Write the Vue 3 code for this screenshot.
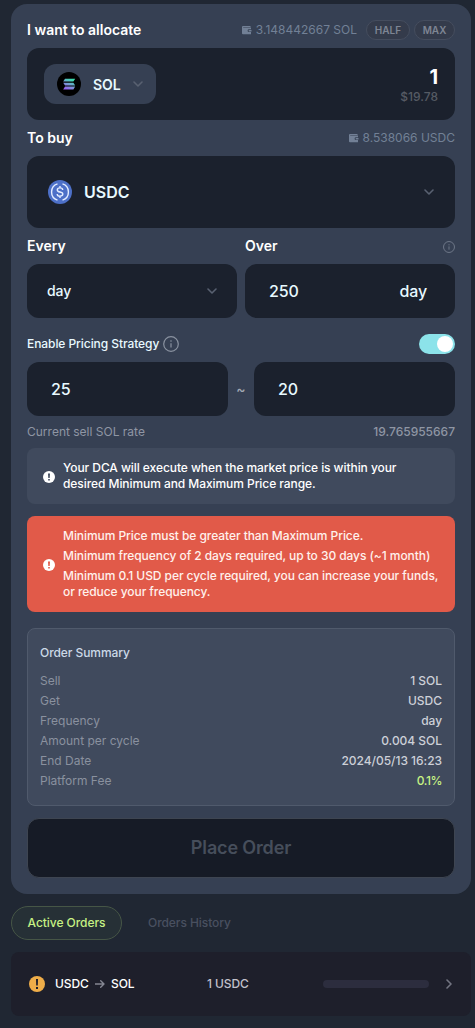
<script setup>
const summary = [
  { label: 'Sell', value: '1 SOL' },
  { label: 'Get', value: 'USDC' },
  { label: 'Frequency', value: 'day' },
  { label: 'Amount per cycle', value: '0.004 SOL' },
  { label: 'End Date', value: '2024/05/13 16:23' },
  { label: 'Platform Fee', value: '0.1%', accent: true },
]
const errors = [
  'Minimum Price must be greater than Maximum Price.',
  'Minimum frequency of 2 days required, up to 30 days (~1 month)',
  'Minimum 0.1 USD per cycle required, you can increase your funds, or reduce your frequency.',
]
</script>

<template>
  <main class="page">
    <section class="card">
      <div class="head first">
        <span class="title">I want to allocate</span>
        <div class="balance">
          <svg class="wallet" width="10" height="9" viewBox="0 0 10 9"><path fill="currentColor" d="M1 0h7.500v1H1.200v.5H9v1.800H7a1.300 1.300 0 0 0 0 2.800H9V8.300H1A1 1 0 0 1 0 7.300V1a1 1 0 0 1 1-1zM7.300 4h2.200v1.500H7.300a.7.7 0 0 1 0-1.500z" /></svg>
          <span class="amount">3.148442667 SOL</span>
          <span class="pill half">HALF</span>
          <span class="pill max">MAX</span>
        </div>
      </div>

      <div class="box token-box">
        <div class="token-pill">
          <svg width="24" height="24" viewBox="0 0 24 24">
            <defs>
              <linearGradient id="sol" x1="0" y1="1" x2="0.6" y2="0">
                <stop offset="0" stop-color="#9b55f5" />
                <stop offset=".5" stop-color="#7d93d8" />
                <stop offset="1" stop-color="#3bdcae" />
              </linearGradient>
            </defs>
            <circle cx="12" cy="12" r="12" fill="#000" />
            <path fill="url(#sol)" d="M8 6.800h10.200l-1.800 2.800H6.200zM6.200 10.700h10.200l1.800 2.800H8zM8 14.600h10.200l-1.800 2.800H6.200z" />
          </svg>
          <span class="sol-name">SOL</span>
          <svg class="chev" width="10" height="6" viewBox="0 0 10 6"><path d="M1 1l4 4 4-4" /></svg>
        </div>
        <div class="sum">
          <span class="sum-value">1</span>
          <span class="sum-usd">$19.78</span>
        </div>
      </div>

      <div class="head">
        <span class="title">To buy</span>
        <div class="balance">
          <svg class="wallet" width="10" height="9" viewBox="0 0 10 9"><path fill="currentColor" d="M1 0h7.500v1H1.200v.5H9v1.800H7a1.300 1.300 0 0 0 0 2.800H9V8.300H1A1 1 0 0 1 0 7.300V1a1 1 0 0 1 1-1zM7.300 4h2.200v1.500H7.300a.7.7 0 0 1 0-1.500z" /></svg>
          <span class="amount">8.538066 USDC</span>
        </div>
      </div>

      <div class="box buy-box">
        <svg width="24" height="24" viewBox="0 0 24 24" fill="none" stroke="#e4edff">
          <circle cx="12" cy="12" r="12" fill="#4d70c8" stroke="none" />
          <path stroke-width="1.400" d="M9.500 3.900a8.500 8.500 0 0 0 0 16.200M14.500 3.900a8.500 8.500 0 0 1 0 16.200" />
          <path stroke-width="1.400" d="M14.700 10c0-1.400-1.100-2.100-2.700-2.100s-2.700.7-2.700 2 1 1.800 2.700 2.100 2.800.8 2.800 2.100-1.200 2-2.800 2-2.800-.8-2.800-2.200M12 6v2M12 16v2" />
        </svg>
        <span class="buy-name">USDC</span>
        <svg class="chev" width="10" height="6" viewBox="0 0 10 6"><path d="M1 1l4 4 4-4" /></svg>
      </div>

      <div class="pair">
        <div class="field">
          <div class="head"><span class="title">Every</span></div>
          <div class="box every">
            <span>day</span>
            <svg class="chev" width="10" height="6" viewBox="0 0 10 6"><path d="M1 1l4 4 4-4" /></svg>
          </div>
        </div>
        <div class="field">
          <div class="head">
            <span class="title">Over</span>
            <svg class="info dim" width="12" height="12" viewBox="0 0 16 16"><circle cx="8" cy="8" r="7.300" /><path d="M8 7.200v4.300M8 4.300v1.500" /></svg>
          </div>
          <div class="box over"><span>250</span><span>day</span></div>
        </div>
      </div>

      <div class="strategy">
        <span>Enable Pricing Strategy</span>
        <svg class="info" width="16" height="16" viewBox="0 0 16 16"><circle cx="8" cy="8" r="7.300" /><path d="M8 7.200v4.300M8 4.300v1.500" /></svg>
        <span class="toggle"></span>
      </div>

      <div class="range">
        <div class="box price">25</div>
        <span class="tilde">~</span>
        <div class="box price">20</div>
      </div>

      <div class="rate"><span>Current sell SOL rate</span><span class="rate-value">19.765955667</span></div>

      <div class="notice">
        <svg width="12" height="12" viewBox="0 0 12 12"><circle cx="6" cy="6" r="6" fill="#fff" /><path d="M5 2.400h2L6.700 6.900H5.300zM5.200 8h1.600v1.600H5.200z" fill="#404a5d" /></svg>
        <p>Your DCA will execute when the market price is within your desired Minimum and Maximum Price range.</p>
      </div>

      <div class="notice error">
        <svg width="12" height="12" viewBox="0 0 12 12"><circle cx="6" cy="6" r="6" fill="#fff" /><path d="M5 2.400h2L6.700 6.900H5.300zM5.200 8h1.600v1.600H5.200z" fill="#e15a49" /></svg>
        <div class="errors"><p v-for="e in errors" :key="e">{{ e }}</p></div>
      </div>

      <div class="summary">
        <h2>Order Summary</h2>
        <div v-for="row in summary" :key="row.label" class="row">
          <span>{{ row.label }}</span>
          <span class="val" :class="{ accent: row.accent }">{{ row.value }}</span>
        </div>
      </div>

      <button class="place">Place Order</button>
    </section>

    <nav class="tabs">
      <span class="tab active">Active Orders</span>
      <span class="tab">Orders History</span>
    </nav>

    <section class="order">
      <svg width="16" height="16" viewBox="0 0 16 16"><circle cx="8" cy="8" r="8" fill="#efad49" /><path d="M7 3h2l-.2 6.500H7.200zM7 11h2v2H7z" fill="#1f1f2c" /></svg>
      <span class="from">USDC</span>
      <svg class="arrow" width="10" height="8" viewBox="0 0 10 8"><path d="M0 4h9M5.700 .8L9 4 5.700 7.200" /></svg>
      <span class="to">SOL</span>
      <span class="qty">1 USDC</span>
      <span class="progress"></span>
      <svg class="next" width="6" height="10" viewBox="0 0 6 10"><path d="M1 1l4 4-4 4" /></svg>
    </section>
  </main>
</template>

<style>
body { background: #202733; }
</style>

<style scoped>
* { box-sizing: border-box; }
.page {
  width: 475px;
  height: 1028px;
  padding: 4px 4px 0 11px;
  overflow: hidden;
  background: #202733;
  font-family: Inter, "Liberation Sans", sans-serif;
  font-size: 12px;
  line-height: 16px;
  color: #e8f9ff;
}
p, h2 { margin: 0; }
.card { height: 890px; padding: 8px 16px 16px; border-radius: 16px; background: #364053; }
.head { height: 36px; display: flex; align-items: center; justify-content: space-between; }
.title { font-size: 14px; font-weight: 600; color: #fff; }
.balance { display: flex; align-items: center; color: #728096; }
.wallet { margin-right: 4px; }
.amount { font-size: 12px; white-space: nowrap; }
.pill {
  height: 20px;
  display: flex;
  align-items: center;
  justify-content: center;
  border: 1px solid #454d5e;
  border-radius: 10px;
  background: #343b4b;
  color: #7e8593;
  font-size: 10px;
  font-weight: 600;
}
.half { width: 44px; margin-left: 9px; }
.max { width: 41px; margin-left: 4px; }
.box { display: flex; align-items: center; border-radius: 12px; background: #1b212d; }
.token-box { height: 72px; padding: 0 17px; justify-content: space-between; }
.token-pill { width: 112px; height: 40px; padding: 0 13px; display: flex; align-items: center; border-radius: 12px; background: #364053; }
.sol-name { margin-left: 12px; font-size: 14px; line-height: 20px; padding-top: 1px; font-weight: 600; }
.chev { margin-left: auto; fill: none; stroke: #596171; stroke-width: 1.6; stroke-linecap: round; stroke-linejoin: round; }
.sum { display: flex; flex-direction: column; align-items: flex-end; padding-top: 1px; }
.sum-value { font-size: 20px; line-height: 24px; font-weight: 700; color: #fff; }
.sum-usd { color: #565b64; font-weight: 500; }
.buy-box { height: 72px; padding: 0 21px; }
.buy-name { margin-left: 12px; font-size: 16px; font-weight: 600; }
.pair { display: flex; gap: 8px; }
.field { flex: 1; }
.every { height: 54px; padding: 0 20px; font-size: 14px; font-weight: 500; letter-spacing: -0.1px; }
.over { height: 54px; padding: 0 28px 0 24px; justify-content: space-between; font-size: 16px; font-weight: 500; letter-spacing: -0.15px; }
.info { fill: none; stroke: #8a92a0; stroke-width: 1.2; }
.dim { margin-top: 2px; stroke: #747d8d; }
.strategy { height: 20px; margin-top: 16px; display: flex; align-items: center; gap: 4px; font-weight: 500; letter-spacing: -0.07px; }
.toggle { width: 36px; height: 20px; margin-left: auto; padding: 2px; border-radius: 10px; background: #8ce3ea; display: flex; justify-content: flex-end; }
.toggle::after { content: ""; width: 16px; height: 16px; border-radius: 50%; background: #fff; }
.range { margin-top: 8px; display: flex; align-items: center; }
.price { flex: 1; height: 54px; padding-left: 24px; font-size: 16px; font-weight: 500; letter-spacing: -0.15px; }
.tilde { width: 26px; text-align: center; font-size: 14px; font-weight: 500; color: #a2a8b3; }
.rate { margin: 8px 0; display: flex; justify-content: space-between; color: #8f96a4; }
.rate-value { font-weight: 500; }
.notice { height: 56px; padding: 0 16px; display: flex; align-items: center; gap: 8px; border-radius: 8px; background: #404a5d; color: #fff; font-weight: 500; letter-spacing: -0.066px; }
.notice svg { flex: none; margin-top: 1px; }
.error { height: 96px; margin-top: 12px; background: #e15a49; color: #fff1ec; }
.errors { display: flex; flex-direction: column; gap: 4px; }
.summary { height: 178px; margin-top: 16px; padding: 16px 12px; border: 1px solid #505a6c; border-radius: 8px; background: #404a5d; color: #8a919f; }
.summary h2 { margin-bottom: 12px; font-size: 12px; font-weight: 500; letter-spacing: -0.07px; color: #ccd9e7; }
.row { height: 20px; display: flex; justify-content: space-between; }
.val { color: #cdd0d8; font-weight: 500; letter-spacing: -0.03px; }
.val.accent { color: #c7f284; letter-spacing: -0.4px; }
.place { display: block; width: 428px; height: 60px; margin-top: 12px; padding: 0 0 2px; border: 1px solid #3e4551; border-radius: 12px; background: #161b26; color: #464e5b; font-family: inherit; font-size: 18px; font-weight: 600; letter-spacing: -0.15px; }
.tabs { margin-top: 12px; display: flex; align-items: center; gap: 9px; }
.tab { height: 34px; padding: 0 16px; display: flex; align-items: center; border: 1px solid transparent; border-radius: 17px; color: #495060; font-weight: 500; letter-spacing: -0.06px; }
.active { width: 111px; padding: 0; justify-content: center; border-color: #465646; background: #263036; color: #c7f284; }
.order { height: 64px; margin-top: 12px; padding: 0 19px 0 18px; display: flex; align-items: center; border-radius: 8px; background: #1e1f2b; color: #fff; font-weight: 500; letter-spacing: -0.1px; }
.from { width: 34px; margin-left: 10px; }
.arrow { margin: 0 6px; fill: none; stroke: #858793; stroke-width: 1.4; stroke-linecap: round; stroke-linejoin: round; }
.to { width: 96px; }
.qty { color: #c2c1cb; }
.progress { width: 106px; height: 8px; margin-left: auto; border-radius: 4px; background: #2c2d3e; }
.next { margin-left: 17px; fill: none; stroke: #737582; stroke-width: 1.6; stroke-linecap: round; stroke-linejoin: round; }
</style>
